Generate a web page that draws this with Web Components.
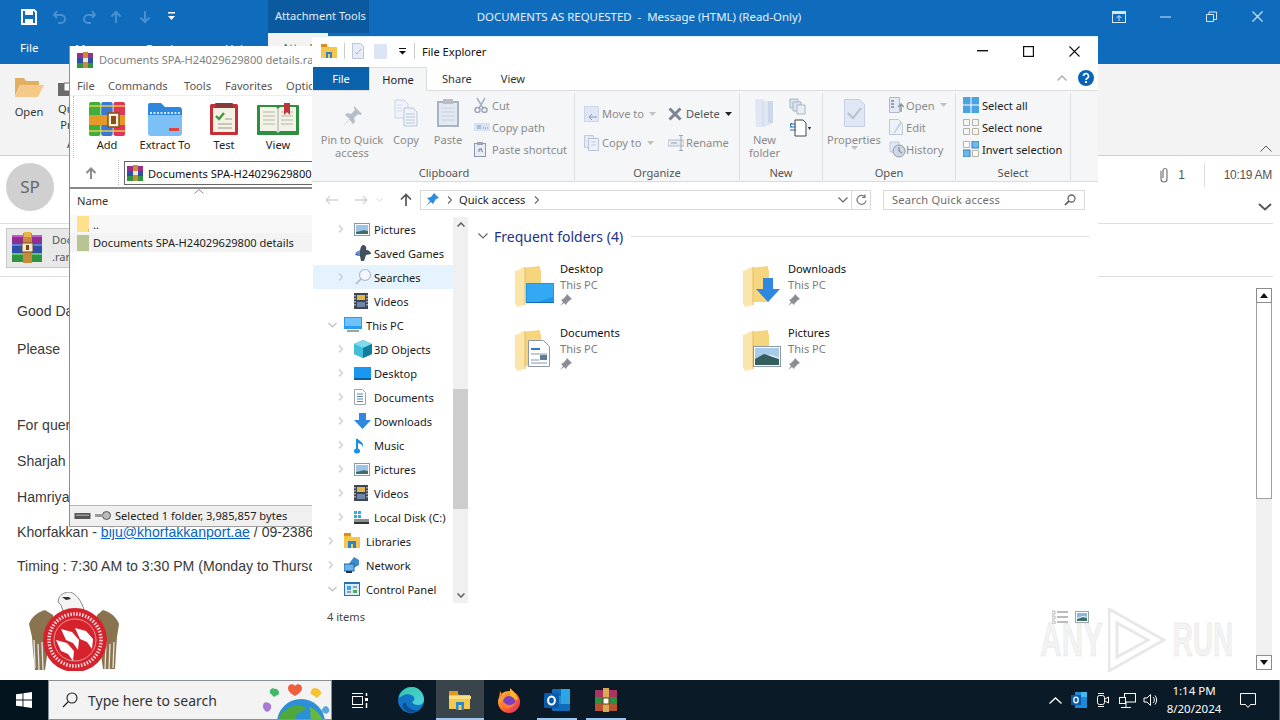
<!DOCTYPE html>
<html lang="en">
<head>
<meta charset="utf-8">
<title>Documents as requested</title>
<style>
  :root { --ui: "Noto Sans", "Open Sans", sans-serif; }
  html, body { margin: 0; padding: 0; width: 1280px; height: 720px; overflow: hidden; background: #fff; font-family: var(--ui); }
  desk-top { display: block; position: relative; width: 1280px; height: 680px; overflow: hidden; }
</style>
</head>
<body>
<desk-top>
  <mail-window></mail-window>
  <rar-window></rar-window>
  <explorer-window></explorer-window>
  <any-mark></any-mark>
</desk-top>
<task-bar></task-bar>

<script>
// svg bodies, [width, height, markup]
const ICONS = {
  save: [18,18,'<path d="M2 2h12l2 2v12H2z" fill="none" stroke="#fff" stroke-width="2"/><rect x="5" y="2" width="8" height="5" fill="#fff"/><rect x="5" y="11" width="8" height="5" fill="#fff"/>'],
  undo: [16,16,'<path d="M5 2L2 6l3 3M3 6h6a4 4 0 0 1 0 8H6" fill="none" stroke="#4a90cf" stroke-width="2"/>'],
  redo: [16,16,'<path d="M11 2l3 4-3 3M13 6H7a4 4 0 0 0 0 8h3" fill="none" stroke="#4a90cf" stroke-width="2"/>'],
  qup: [12,14,'<path d="M6 13V2M1.5 6.5L6 2l4.5 4.5" fill="none" stroke="#4a90cf" stroke-width="2"/>'],
  qdown: [12,14,'<path d="M6 1v11M1.5 7.5L6 12l4.5-4.5" fill="none" stroke="#4a90cf" stroke-width="2"/>'],
  custom: [8,9,'<rect y="0" width="7" height="1.5" fill="#fff"/><path d="M0 4h7L3.5 8z" fill="#fff"/>'],
  display: [14,12,'<rect x=".5" y=".5" width="13" height="11" fill="none" stroke="#d5e6f5"/><rect x=".5" y=".5" width="13" height="2.5" fill="#d5e6f5"/><path d="M7 10V5M4.5 7L7 4.5 9.5 7" stroke="#d5e6f5" fill="none"/>'],
  wmin: [11,2,'<rect width="11" height="1" y=".5" fill="#d5e6f5"/>'],
  wrestore: [11,11,'<path d="M.5 3.5h7v7h-7zM3 3V1h7.500v7.500H8" fill="none" stroke="#d5e6f5"/>'],
  wclose: [11,11,'<path d="M.5.5l10 10M10.5.5l-10 10" stroke="#d5e6f5" fill="none" stroke-width="1.1"/>'],
  mopen: [30,24,'<path d="M1 22V4h9l2 3h13v4H6z" fill="#e0b060"/><path d="M1 23l5-12h24l-6 12z" fill="#f5c987"/>'],
  qprint: [12,18,'<rect y="3" width="12" height="13" fill="#6a6a6a"/><path d="M6 3h6v8H6z" fill="#fff" stroke="#6a6a6a"/>'],
  clip: [10,16,'<path d="M2 4v8a3 3 0 0 0 6 0V3.5a2 2 0 0 0-4 0V11" fill="none" stroke="#777" stroke-width="1.2"/>'],
  mchev: [14,8,'<path d="M1 1l6 5.5L13 1" fill="none" stroke="#555" stroke-width="1.8"/>'],
  mup: [12,7,'<path d="M.5 6.5L6 1l5.500 5.500" fill="none" stroke="#555"/>'],

  rar: [32,32,'<rect x="1" y="3" width="30" height="9" fill="#8e2f92"/><rect x="1" y="12" width="30" height="9" fill="#2d4fa8"/><rect x="1" y="21" width="30" height="9" fill="#2f9340"/><rect x="1" y="3" width="30" height="2" fill="#c45bc8"/><rect x="1" y="12" width="30" height="2" fill="#5d82d8"/><rect x="1" y="21" width="30" height="2" fill="#66c46f"/><rect x="12" y="1" width="9" height="30" fill="#c98a3c"/><rect x="11" y="11" width="11" height="9" fill="#f3e7cf" stroke="#7a4a1b"/><rect x="15" y="13" width="3" height="5" fill="#7a4a1b"/><rect x="13" y="0" width="7" height="5" fill="#e9b44a"/>'],
  rarsm: [16,16,'<rect y="1" width="16" height="5" fill="#9a2f88"/><rect y="6" width="16" height="5" fill="#2d4fa8"/><rect y="11" width="16" height="5" fill="#2f9340"/><rect x="6" y="0" width="5" height="16" fill="#c98a3c"/><rect x="6" y="6" width="5" height="4" fill="#f3e7cf"/>'],
  rarbar: [24,24,'<rect x="1" y="2" width="22" height="7" fill="#a8345f"/><rect x="1" y="9" width="22" height="7" fill="#2f8f40"/><rect x="1" y="16" width="22" height="7" fill="#b5522f"/><rect x="9" y="0" width="6" height="24" fill="#d9a955"/><rect x="9" y="10" width="6" height="6" fill="#fff" stroke="#6a3a10"/>'],
  add: [36,34,'<rect x="0" y="0" width="11.5" height="34" rx="2" fill="#3fae3c"/><rect x="12.2" y="0" width="11.5" height="34" rx="2" fill="#3a78d4"/><rect x="24.500" y="0" width="11.500" height="34" rx="2" fill="#e0365a"/><rect x="0" y="3" width="36" height="2" fill="#f4d040" opacity=".7"/><rect x="0" y="28" width="36" height="2" fill="#f4d040" opacity=".7"/><rect x="0" y="13" width="36" height="10" fill="#e59a28"/><rect x="19" y="11" width="11" height="14" fill="#f7f0df" stroke="#8a4e14" stroke-width="1.5"/><rect x="22" y="14" width="5" height="8" fill="#8a4e14"/>'],
  extract: [36,34,'<path d="M1 30V3a2 2 0 0 1 2-2h11l4 4h14a3 3 0 0 1 3 3v22a3 3 0 0 1-3 3H4a3 3 0 0 1-3-3z" fill="#2f86dd"/><path d="M1 13h34v18a3 3 0 0 1-3 3H4a3 3 0 0 1-3-3z" fill="#7cc0f5"/><path d="M3 11h30" stroke="#cde8fb" stroke-dasharray="2 1.5" stroke-width="2"/><rect x="22" y="26" width="10" height="3" fill="#e2433f"/>'],
  test: [28,32,'<rect x="0" y="1" width="28" height="31" rx="1.5" fill="#c72f38"/><rect x="3" y="5" width="22" height="24" fill="#f5f0e4"/><rect x="5" y="0" width="18" height="5" rx="1" fill="#8a3a3a"/><path d="M6 13l3 3 5-6" stroke="#3b9c3e" stroke-width="2.4" fill="none"/><path d="M15 16h7M8 21h14M8 25h14" stroke="#9a9a8a"/>'],
  book: [42,32,'<rect x="0" y="2" width="42" height="30" rx="1" fill="#2f8f40"/><path d="M3 4h16l2 2 2-2h16v24H23l-2 2-2-2H3z" fill="#f2f2e8"/><path d="M21 6v24" stroke="#aaa"/><path d="M6 9h12M6 13h12M6 17h12M6 21h12M24 9h12M24 13h12M24 17h12M24 21h12" stroke="#b5b5a8"/><path d="M27 0h6v12l-3-3-3 3z" fill="#c2343a"/>'],
  rup: [14,14,'<path d="M7 13V3M2.5 7L7 2.5 11.5 7" fill="none" stroke="#8a8a8a" stroke-width="2"/>'],
  sortc: [10,5,'<path d="M.5 4.5L5 .5l4.500 4" fill="none" stroke="#888"/>'],
  rfolder: [12,16,'<rect width="12" height="16" fill="#ffe08c"/><rect x="11" y="13" width="1" height="3" fill="#e0c070"/>'],
  rsel: [12,16,'<rect width="12" height="16" fill="#b9c494"/>'],
  rdrive: [17,8,'<rect x=".5" y="1" width="16" height="6" fill="#555"/><rect x="2" y="2.5" width="13" height="1.5" fill="#999"/>'],
  rkey: [16,9,'<circle cx="11.5" cy="4.5" r="4" fill="#bbb" stroke="#555"/><rect y="3" width="8" height="3" fill="#999"/>'],

  qaf: [16,16,'<path d="M0 2h6l2 2h8v11H0z" fill="#f4c64e"/><rect y="1" width="6" height="3" fill="#d98f1e"/><rect x="5" y="9" width="6" height="6" fill="#2f83c8"/><rect x="7" y="11" width="2" height="4" fill="#f4c64e"/>'],
  qcheck: [12,16,'<path d="M.5.5h8l3 3v12H.5z" fill="#e7ecf7" stroke="#b9c6dd"/><path d="M3 9l2 2 4-5" stroke="#a9b8d6" fill="none"/>'],
  qblank: [13,15,'<path d="M0 0h13v15H0z" fill="#dde5f5"/>'],
  qdrop: [8,7,'<rect width="7" height="1" fill="#111"/><path d="M0 3h7L3.5 6.5z" fill="#111"/>'],
  xmin: [11,2,'<rect width="11" height="1.4" fill="#111"/>'],
  xmax: [11,11,'<rect x=".6" y=".6" width="9.8" height="9.8" fill="none" stroke="#111" stroke-width="1.2"/>'],
  xclose: [11,11,'<path d="M.5.5l10 10M10.5.5l-10 10" stroke="#111" fill="none" stroke-width="1.1"/>'],
  collapse: [10,6,'<path d="M.5 5.5L5 1l4.500 4.500" fill="none" stroke="#aaa" stroke-width="1.4"/>'],
  help: [16,16,'<circle cx="8" cy="8" r="8" fill="#0b63b5"/><path d="M5.500 6a2.500 2.500 0 1 1 3.700 2.200C8.300 8.800 8 9.200 8 10" fill="none" stroke="#fff" stroke-width="1.700"/><rect x="7" y="11" width="2" height="2" fill="#fff"/>'],
  pinbig: [22,22,'<path d="M13 1l8 8-2 1-2-1-4 4 1 4-2 2-4-5-6 7 7-7-5-4 2-2 4 1 4-4-1-2z" fill="#b5bdc8"/>'],
  copybig: [24,28,'<path d="M1 1h9l4 4v14H1z" fill="#eef2f9" stroke="#c8d3e3"/><path d="M10 9h9l4 4v14H10z" fill="#eef2f9" stroke="#b9c6da"/><path d="M12 15h9M12 18h9M12 21h9M12 24h9" stroke="#bcc7d8"/><path d="M3 6h5M3 9h5M3 12h5" stroke="#d5dcea"/>'],
  pastebig: [22,28,'<rect x="1" y="3" width="20" height="24" fill="#e3e9f3" stroke="#a9b2bf" stroke-width="2"/><rect x="6" y="0" width="10" height="5" fill="#b7bdc6"/><path d="M4 9h14M4 13h14M4 17h14M4 21h14" stroke="#c8d1e2"/>'],
  cut: [14,16,'<path d="M3 1l6 10M11 1L5 11" stroke="#aab4c6" stroke-width="1.6"/><circle cx="3.5" cy="13" r="2.5" fill="none" stroke="#9aa5b8" stroke-width="1.5"/><circle cx="10.5" cy="13" r="2.5" fill="none" stroke="#9aa5b8" stroke-width="1.5"/>'],
  cpath: [16,8,'<rect width="16" height="8" fill="#d9e2f5"/><path d="M4 2v4M6 2v4M9 5h1M11 5h1M13 5h1" stroke="#8c97ad"/>'],
  pshort: [12,15,'<rect x=".5" y="1.5" width="11" height="13" fill="#e7ecf5" stroke="#8e98a8"/><rect x="3" y="0" width="6" height="3" fill="#9aa4b2"/><path d="M5 10V7h3l-1.2 1.2L9 10" stroke="#6e7c90" fill="none"/>'],
  moveto: [15,16,'<rect width="15" height="16" fill="#dfe6f4"/><rect x=".5" y=".5" width="14" height="15" fill="none" stroke="#cdd6e6"/><path d="M13 11H6M8 8l-3 3 3 3" stroke="#8c9ab2" fill="none"/>'],
  copyto: [15,16,'<path d="M.5.5h9v12h-9z" fill="#e3eaf6" stroke="#c0cbdd"/><path d="M4.5 3.5h10v12h-10z" fill="#edf1f9" stroke="#b6c3d8"/><path d="M7 7h5M7 10h5" stroke="#c0cbdd"/>'],
  del: [14,14,'<path d="M1.5 1.5l11 11M12.5 1.5l-11 11" stroke="#7b8593" stroke-width="3"/>'],
  rename: [16,16,'<rect y="5" width="16" height="6" fill="#e6ebf3" stroke="#b5bdca"/><path d="M3 8h6" stroke="#9aa4b4"/><path d="M13 0v16M11 .5h4M11 15.5h4" stroke="#9aa4b4"/>'],
  dropg: [7,4,'<path d="M0 0h7L3.5 4z" fill="#c0c0c0"/>'],
  dropk: [7,4,'<path d="M0 0h7L3.5 4z" fill="#222"/>'],
  newf: [22,30,'<path d="M1 1h8l2 2h8v22l-8 4H2z" fill="#dfe6f4"/><path d="M9 4v24" stroke="#cfd8e8"/><path d="M14 3h5v22h-5z" fill="#ccd8ea"/>'],
  newi: [20,17,'<path d="M1 1h8v9H1z" fill="#dde4f0" stroke="#a8b3c4"/><path d="M4 4h8v9H4z" fill="#dde4f0" stroke="#a8b3c4"/><path d="M8 7h8v9H8z" fill="#e9eef6" stroke="#a8b3c4"/>'],
  easy: [22,18,'<path d="M6 1h8l3 3v13H6z" fill="#fff" stroke="#444"/><path d="M1 5h6M1 8h6M1 11h6" stroke="#1d6ec0"/><path d="M3 4l-2 2 2 2" stroke="#1d6ec0" fill="none"/><path d="M19 8h3l-1.500 3z" fill="#222"/>'],
  props: [21,28,'<path d="M.5.5h15l5 5v22H.5z" fill="#dfe6f4" stroke="#c5cfe0"/><path d="M4 14l5 5 8-10" stroke="#b6bfcc" stroke-width="2" fill="none"/>'],
  opens: [15,16,'<path d="M.5.5h10v15H.5z" fill="#e4eaf5" stroke="#aeb9ca"/><path d="M2 4h3M2 7h3M2 10h3" stroke="#7d8898" stroke-width="1.5"/><path d="M12 15V8M9 10l3-3 3 3" stroke="#8a97a8" fill="none" stroke-width="1.5"/>'],
  edit: [14,16,'<path d="M.5.5h9l4 4v11H.5z" fill="#edf1f8" stroke="#bcc7d8"/><path d="M11 3L5 13l-1 2 2-1 7-10z" fill="#c7d0df"/>'],
  hist: [17,17,'<path d="M1 1h9v10H1z" fill="#dfe6f4" stroke="#c0cbdc"/><circle cx="10" cy="10" r="6" fill="#cdd6e4" stroke="#8d99aa"/><path d="M10 6v4l3 2" stroke="#707c8c" fill="none"/>'],
  selall: [16,16,'<rect width="16" height="16" fill="#4aa3e3"/><path d="M8 0v16M0 8h16" stroke="#fff"/>'],
  selnone: [16,16,'<path d="M.5.5h6v6h-6zM9.5.5h6v6h-6zM.5 9.5h6v6h-6zM9.5 9.5h6v6h-6z" fill="none" stroke="#b8b0a0"/>'],
  selinv: [16,16,'<rect x="0" y="9" width="7" height="7" fill="#6cb9ee" stroke="#2f7fc0"/><rect x="9" y="0" width="7" height="7" fill="#6cb9ee" stroke="#2f7fc0"/><path d="M.5.5h6v6h-6zM9.5 9.5h6v6h-6z" fill="#fff" stroke="#b8b0a0"/>'],
  navb: [14,10,'<path d="M13 5H1M5 1L1 5l4 4" stroke="#d4d4d4" stroke-width="1.3" fill="none"/>'],
  navf: [14,10,'<path d="M1 5h12M9 1l4 4-4 4" stroke="#d4d4d4" stroke-width="1.3" fill="none"/>'],
  navd: [7,4,'<path d="M.5.5L3.5 3l3-2.500" stroke="#d8d8d8" fill="none"/>'],
  navu: [12,13,'<path d="M6 13V2M1 6.5L6 1.5l5 5" stroke="#555" stroke-width="1.7" fill="none"/>'],
  star: [14,13,'<path d="M9 0l5 5-3 1-3 5-2-2-5 4 4-5-3-3 4-1z" fill="#2d8ee0"/>'],
  gt: [5,8,'<path d="M1 .5L4.5 4 1 7.5" stroke="#666" fill="none" stroke-width="1.1"/>'],
  chevd: [10,6,'<path d="M.5.5L5 5 9.5.5" stroke="#666" stroke-width="1.2" fill="none"/>'],
  refresh: [11,12,'<path d="M9 3a4.5 4.5 0 1 0 1 3.5M9 .5V3.5H6" stroke="#777" fill="none" stroke-width="1.2"/>'],
  mag: [12,12,'<circle cx="7.5" cy="4.5" r="3.5" fill="none" stroke="#666" stroke-width="1.3"/><path d="M5 7L1 11" stroke="#555" stroke-width="1.7"/>'],
  navr: [5,8,'<path d="M1 .5L4.5 4 1 7.5" stroke="#c8c8c8" fill="none" stroke-width="1.1"/>'],
  navo: [9,6,'<path d="M.5 1L4.5 5l4-4" stroke="#bdbdbd" fill="none" stroke-width="1.1"/>'],
  sbu: [8,5,'<path d="M.5 4.5L4 1l3.500 3.500" stroke="#606060" stroke-width="1.5" fill="none"/>'],
  sbd: [8,5,'<path d="M.5.5L4 4 7.5.5" stroke="#606060" stroke-width="1.5" fill="none"/>'],
  pic: [16,13,'<rect x=".5" y=".5" width="15" height="12" fill="#fff" stroke="#8d98a6"/><path d="M2 2h12v6l-4-1-8 2z" fill="#9fc3e6"/><path d="M2 9l8-2 4 1v3H2z" fill="#3f6f6a"/>'],
  games: [18,18,'<path d="M9 1c3 0 4 3 3 5 3 0 5 2 5 4l-5 1-2 6H7l-1-5-5-1 3-4 2 1c0-3 1-7 3-7z" fill="#41505f"/><path d="M1 9l5-3v6z" fill="#5c94d6"/>'],
  searchi: [18,18,'<circle cx="11" cy="7" r="5.5" fill="#f3f7fb" stroke="#a5b8cc" stroke-width="1.1"/><path d="M7 11l-5 5" stroke="#a5b8cc" stroke-width="1.6"/>'],
  video: [14,16,'<rect width="14" height="16" fill="#3f4650"/><rect x="3" y="2" width="8" height="5" fill="#e0b84f"/><rect x="3" y="9" width="8" height="5" fill="#6b87b0"/><path d="M1 2v12M13 2v12" stroke="#ddd" stroke-dasharray="1.5 1.5" stroke-width="1.2"/>'],
  pc: [18,16,'<rect x="0" y="0" width="18" height="12" fill="#2b9cf2"/><rect x="1" y="1" width="16" height="8" fill="#6dc2f9"/><rect x="3" y="13" width="12" height="2" fill="#9aa4ad"/>'],
  cube: [18,18,'<path d="M9 0l9 4v10l-9 4-9-4V4z" fill="#21a3c4"/><path d="M9 8L0 4l9-4 9 4z" fill="#7fdbec"/><path d="M9 8v10l9-4V4z" fill="#137d9f"/><path d="M0 4l9 4v10L0 14z" fill="#4cc4e0" opacity=".8"/>'],
  desk: [17,13,'<rect width="17" height="13" fill="#1a97ee"/><rect y="11" width="17" height="2" fill="#0d5e9e"/>'],
  doc: [12,16,'<path d="M.5.5h8l3 3v12H.5z" fill="#fff" stroke="#9aa6b3"/><path d="M3 5h6M3 7.5h6M3 10h6M3 12.5h6" stroke="#5d85ad"/>'],
  dl: [17,16,'<path d="M5 0h7v7h5l-8.500 9L0 7h5z" fill="#2f87df"/>'],
  music: [11,17,'<path d="M3 2v11" stroke="#1b8fe4" stroke-width="2"/><ellipse cx="3" cy="14" rx="3" ry="2.5" fill="#1b8fe4"/><path d="M3 1c1 3 7 3 6 9-1-3-4-4-6-4z" fill="#1b8fe4"/>'],
  disk: [15,13,'<rect x="0" y="0" width="3" height="3" fill="#3da9e0"/><rect x="4" y="0" width="3" height="3" fill="#3da9e0"/><rect x="0" y="4" width="3" height="3" fill="#3da9e0"/><rect x="4" y="4" width="3" height="3" fill="#3da9e0"/><rect x="0" y="8" width="15" height="5" fill="#8a8f92"/><rect x="0" y="11" width="15" height="2" fill="#333"/>'],
  lib: [16,16,'<path d="M0 2h6l2 2h8v11H0z" fill="#f4c64e"/><rect y="0" width="7" height="3" fill="#d98f1e"/><rect x="4" y="8" width="8" height="7" fill="#2f83c8"/><rect x="7" y="11" width="2" height="4" fill="#f4c64e"/>'],
  net: [16,16,'<path d="M10 0l5 3v5l-7 4-4-4z" fill="#3a8ad0"/><rect x="0" y="7" width="10" height="7" fill="#6ab2e8" stroke="#29629b"/><rect x="2" y="14" width="6" height="2" fill="#333"/>'],
  cp: [16,14,'<rect width="16" height="14" fill="#2d6fb6"/><rect x="1" y="2" width="14" height="11" fill="#d6ebf9"/><rect x="3" y="4" width="4" height="4" fill="#41a3e0"/><rect x="9" y="8" width="4" height="3" fill="#4caf50"/><path d="M3 10h4M9 5h4" stroke="#555"/>'],
  fback: [42,42,'<path d="M6 3l19-2v4h1v32H6z" fill="#f5d67e"/><path d="M0 6l10-4v38L2 42 0 38z" fill="#fce5a8"/><path d="M10 2v38" stroke="#e2bd6a"/>'],
  fdesk: [28,20,'<rect width="28" height="20" fill="#1a97ee"/><path d="M1 1h26v13l-16 5H1z" fill="#34a8f3"/><rect y="19" width="28" height="1" fill="#0d6cb3"/>'],
  fdl: [24,24,'<path d="M7 0h10v11h7L12 24 0 11h7z" fill="#2f87df"/>'],
  fdoc: [22,27,'<path d="M.5.5h15l6 6v20H.5z" fill="#fff" stroke="#8d97a5"/><path d="M3 9h9" stroke="#2a7ad0" stroke-width="2"/><path d="M3 14h16M3 20h8M3 23h16" stroke="#7e97b0"/><rect x="12" y="15" width="7" height="5" fill="#5d7c96"/>'],
  fpic: [28,21,'<rect x=".5" y=".5" width="27" height="20" fill="#fff" stroke="#8d98a6"/><path d="M2 2h24v10l-8-3L2 13z" fill="#a8cbea"/><path d="M2 13l9-5 15 5v6H2z" fill="#335f5e"/>'],
  pin: [12,12,'<path d="M7 0l5 5-2 1-3 3-1 2-2-2-4 3 3-4-2-2 2-1 3-3z" fill="#8a8f96"/>'],
  vdet: [16,14,'<path d="M0 1h3v3H0zM0 6h3v3H0zM0 11h3v3H0z" fill="none" stroke="#a5a5a5" stroke-width=".8"/><path d="M5 2h11M5 7h11M5 12h11" stroke="#777"/>'],
  vtile: [14,12,'<rect x=".5" y=".5" width="13" height="11" fill="#fff" stroke="#9aa4ad"/><path d="M2 2h10v4l-4-1-6 2z" fill="#8ab6df"/><path d="M2 8l6-2 4 1v3H2z" fill="#3f6f6a"/>'],

  start: [16,16,'<path d="M0 2.3L6.5 1.4v6.2H0zM7.4 1.3L16 0v7.6H7.4zM0 8.4h6.500v6.200L0 13.7zM7.4 8.4H16V16l-8.600-1.300z" fill="#fff"/>'],
  tsearch: [16,16,'<circle cx="10" cy="6" r="5" fill="none" stroke="#222" stroke-width="1.1"/><path d="M6 10l-5 5" stroke="#222" stroke-width="1.3"/>'],
  earth: [72,40,'<circle cx="41" cy="42" r="24" fill="#2d8fd6"/><path d="M20 34c8-9 18-12 26-7-2 5-10 3-10 9s-4 5-6 6H18z" fill="#4fa83c"/><path d="M49 26c7 2 12 8 14 14H52c-3-4 0-8-3-14z" fill="#67b93f"/><path d="M15 8c-3-2-6 1-5 4l4 4 5-3c1-2-2-6-4-5z" fill="#3eb86b"/><path d="M35 5c-2-3-7-2-7 2 0 4 4 6 7 8 3-2 7-4 7-8 0-4-5-5-7-2z" fill="#ee5f3e"/><path d="M55 7c-3 0-5 3-4 6l6 4 4-4c1-3-3-6-6-6z" fill="#f4c430"/><path d="M4 22c-2 3-1 7 3 9 3-1 5-4 4-7-1-2-5-4-7-2z" fill="#a77ad6"/><path d="M65 25c3 0 5 3 4 6l-3 2c-3-1-5-3-4-5z" fill="#5aa6de"/>'],
  taskview: [16,15,'<rect x=".5" y="3.5" width="10" height="8" fill="none" stroke="#fff"/><path d="M0 .5h11M0 14.5h11" stroke="#fff"/><rect x="13" y="5" width="3" height="3" fill="#fff"/><path d="M14.5 0v3M14.5 10v5" stroke="#fff" stroke-width="1.5"/>'],
  edge: [26,26,'<defs><linearGradient id="e" x1="0" y1="0" x2="1" y2="1"><stop offset="0" stop-color="#34c7a6"/><stop offset="1" stop-color="#4fd4e0"/></linearGradient></defs><circle cx="13" cy="13" r="13" fill="#1174c4"/><path d="M1 10C3 3 9 0 14 0c7 0 12 6 12 13 0 3-3 5-6 5-3 0-5-1-6-3 2-1 3-3 2-5-2-3-8-4-12-1-2 1-3 2-3 1z" fill="url(#e)"/><path d="M8 16c1 5 6 8 12 7-3 3-10 4-14-1-3-3-1-8 2-6z" fill="#0d4f95"/>'],
  xp: [22,19,'<path d="M0 2h8l2 2h11v14H0z" fill="#f7c948"/><rect y="0" width="9" height="4" fill="#e09a1f"/><rect x="0" y="5" width="22" height="3" fill="#fbe08a"/><rect x="7" y="11" width="8" height="8" fill="#2f87cf"/><rect x="9.5" y="14" width="3" height="5" fill="#f7c948"/>'],
  fox: [24,25,'<defs><linearGradient id="f" x1="0" y1="0" x2="1" y2="1"><stop offset="0" stop-color="#ffcb3d"/><stop offset=".5" stop-color="#ff6a2b"/><stop offset="1" stop-color="#e0246a"/></linearGradient></defs><circle cx="12" cy="14" r="11" fill="url(#f)"/><path d="M13 0c3 3 7 6 8 12l-8-2z" fill="#ffb52e"/><path d="M3 3l3 5-4 3z" fill="#ff8a2b"/><circle cx="12" cy="14" r="6" fill="#7a3fc0"/><path d="M6 13c2 4 8 6 13 1-2 6-9 8-13 5-1-2-1-4 0-6z" fill="#ff7b30"/>'],
  ol: [26,24,'<rect x="8" y="1" width="18" height="22" rx="1" fill="#0f6cbd"/><rect x="17" y="1" width="9" height="7" fill="#28a8ea"/><rect x="8" y="8" width="9" height="8" fill="#1f8ad6"/><rect x="17" y="8" width="9" height="8" fill="#50d9ff" opacity=".5"/><rect x="0" y="5" width="15" height="15" rx="1.5" fill="#0a5aa8"/><ellipse cx="7.5" cy="12.5" rx="3.4" ry="4" fill="none" stroke="#fff" stroke-width="2"/>'],
  olt: [16,16,'<rect x="4" y="0" width="12" height="16" fill="#1b8ad8"/><rect x="10" y="0" width="6" height="5" fill="#45b8ef"/><rect x="0" y="3" width="10" height="10" fill="#0a5aa8"/><ellipse cx="5" cy="8" rx="2.2" ry="2.8" fill="none" stroke="#fff" stroke-width="1.3"/>'],
  caret: [13,7,'<path d="M.5 6.5L6.5 1l6 5.500" fill="none" stroke="#fff" stroke-width="1.3"/>'],
  meet: [12,16,'<rect x=".5" y="3.5" width="7" height="9" rx="2" fill="none" stroke="#fff"/><path d="M8 7l3.500-2v6L8 9" fill="none" stroke="#fff"/><path d="M1 1.5h6M1 14.5h6" stroke="#fff"/>'],
  netw: [17,15,'<rect x="5.5" y=".5" width="11" height="8.5" fill="none" stroke="#fff"/><rect x=".5" y="4.5" width="6" height="6" fill="#0a1a26" stroke="#fff"/><path d="M2 14.5h10M7 9v5" stroke="#fff"/>'],
  vol: [16,14,'<path d="M1 5h3l3.500-3.500v11L4 9H1z" fill="none" stroke="#fff"/><path d="M10 4a4 4 0 0 1 0 6M12 2.5a7 7 0 0 1 0 9" fill="none" stroke="#fff"/>'],
  note: [16,15,'<path d="M.5.5h15v11h-5l-2.500 3-2.500-3h-5z" fill="none" stroke="#fff"/>'],
  eagle: [92,79,'<path d="M41 0c-5 0-9 2-11 6l-1 4 3 3 2 6 22 3c-1-8-7-20-15-22z" fill="#f4f4f4" stroke="#8a8a8a"/><path d="M33 5l7 0 2 2-5 1z" fill="#333"/><path d="M24 23L16 18C8 20 2 26 0 32l3 13 1 14 2 19h10l2-14 6-15z" fill="#8a7450"/><path d="M68 23l6-5c8 2 14 8 16 14l-2 13-1 14-1 18H74l-2-14-6-15z" fill="#8a7450"/><path d="M5 48l1 28M9 52l1 26M13 50l1 28M85 50l-1 26M81 52l-1 26M77 50l-1 28" stroke="#e6e6e6" stroke-width="1.300"/><circle cx="46" cy="48" r="32" fill="#d6222c"/><circle cx="46" cy="48" r="21" fill="none" stroke="#f4c8c8" stroke-width=".7"/><circle cx="46" cy="48" r="26" fill="none" stroke="#fff" stroke-width="3.500" stroke-dasharray="1.500 1.500" opacity=".85"/><g fill="#fff"><path transform="translate(41 46)" d="M-9-9L2-6L9 2L8 12L3 5L-4 2z"/><path transform="translate(55 45)" d="M-9-9L2-6L9 2L8 12L3 5L-4 2z"/><path transform="translate(36 57)" d="M-9-9L2-6L9 2L8 12L3 5L-4 2z"/></g>'],
};

function iconMarkup(name) {
  const ic = ICONS[name];
  if (!ic) return '';
  return `<svg xmlns="http://www.w3.org/2000/svg" width="${ic[0]}" height="${ic[1]}" viewBox="0 0 ${ic[0]} ${ic[1]}" style="display:block">${ic[2]}</svg>`;
}

class UiIcon extends HTMLElement {
  constructor() {
    super();
    this.attachShadow({mode: 'open'});
    this.shadowRoot.innerHTML = `<style>:host{display:inline-flex;flex:none;align-items:center;justify-content:center;line-height:0}</style>${iconMarkup(this.getAttribute('name'))}`;
  }
}

// tall ribbon button, icon over label
class BigButton extends HTMLElement {
  constructor() {
    super();
    this.attachShadow({mode: 'open'});
    const w = this.getAttribute('w') || 48;
    const ih = this.getAttribute('ih') || 40;
    const c = this.getAttribute('color') || '#8b8b8b';
    const off = this.getAttribute('off') || 0;
    this.shadowRoot.innerHTML = `
      <style>
        :host{display:flex;flex-direction:column;align-items:center;width:${w}px;flex:none;color:${c};font-size:11.1px;line-height:13px;text-align:center}
        .i{height:${ih}px;display:flex;align-items:center;justify-content:center;padding-top:${off}px;box-sizing:border-box}
      </style>
      <div class="i"><ui-icon name="${this.getAttribute('icon')}"></ui-icon></div>
      <slot></slot>`;
  }
}

class SmallButton extends HTMLElement {
  constructor() {
    super();
    this.attachShadow({mode: 'open'});
    const c = this.getAttribute('color') || '#8b8b8b';
    const h = this.getAttribute('h') || 22;
    const iw = this.getAttribute('iw') || 18;
    const drop = this.getAttribute('drop');
    this.shadowRoot.innerHTML = `
      <style>
        :host{display:flex;align-items:center;height:${h}px;color:${c};font-size:11.1px;white-space:nowrap}
        .i{width:${iw}px;display:flex;justify-content:flex-start;align-items:center}
        .d{margin-left:5px;display:flex}
      </style>
      <div class="i"><ui-icon name="${this.getAttribute('icon')}"></ui-icon></div>
      <slot></slot>${drop ? `<div class="d"><ui-icon name="${drop}"></ui-icon></div>` : ''}`;
  }
}

class RibbonGroup extends HTMLElement {
  constructor() {
    super();
    this.attachShadow({mode: 'open'});
    const w = this.getAttribute('w');
    this.shadowRoot.innerHTML = `
      <style>
        :host{display:flex;flex-direction:column;width:${w}px;flex:none;box-sizing:border-box;border-right:1px solid #dfe0e2;height:87px;margin-top:2px}
        .b{flex:1;display:flex;padding-left:${this.getAttribute('pad') || 0}px;min-height:0}
        .l{height:14px;line-height:14px;text-align:center;font-size:11.1px;color:#555}
      </style>
      <div class="b"><slot></slot></div>
      <div class="l">${this.getAttribute('label')}</div>`;
  }
}

class NavRow extends HTMLElement {
  constructor() {
    super();
    this.attachShadow({mode: 'open'});
    const lvl = this.getAttribute('level') === '1' ? 1 : 2;
    const ch = this.getAttribute('chev');
    const chevIcon = ch === 'o' ? 'navo' : ch === 'r' ? 'navr' : '';
    const bg = this.hasAttribute('hot') ? '#e5f3ff' : 'transparent';
    this.shadowRoot.innerHTML = `
      <style>
        :host{display:flex;align-items:center;height:24px;background:${bg};font-size:11.1px;color:#1a1a1a;white-space:nowrap;padding-left:${lvl === 1 ? 15 : 25}px}
        .c{width:16px;display:flex;align-items:center}
        .i{width:${lvl === 1 ? 22 : 20}px;display:flex;align-items:center}
      </style>
      <div class="c">${chevIcon ? `<ui-icon name="${chevIcon}"></ui-icon>` : ''}</div>
      <div class="i"><ui-icon name="${this.getAttribute('icon')}"></ui-icon></div>
      <slot></slot>`;
  }
}

class FolderTile extends HTMLElement {
  constructor() {
    super();
    this.attachShadow({mode: 'open'});
    this.shadowRoot.innerHTML = `
      <style>
        :host{display:flex;width:228px;height:48px;flex:none;font-size:11.1px;line-height:16px;white-space:nowrap}
        .pic{position:relative;width:45px;height:48px;flex:none}
        .pic .f{position:absolute;left:0;top:4px}
        .pic .o{position:absolute;right:${this.getAttribute('or') || 0}px;bottom:${this.getAttribute('ob') || 6}px}
        .t{color:#111;height:16px}
        .s{color:#7b7b7b;height:16px}
        .p{height:14px;display:flex;align-items:center}
      </style>
      <div class="pic"><ui-icon class="f" name="fback"></ui-icon><ui-icon class="o" name="${this.getAttribute('icon')}"></ui-icon></div>
      <div>
        <div class="t"><slot></slot></div>
        <div class="s">This PC</div>
        <div class="p"><ui-icon name="pin"></ui-icon></div>
      </div>`;
  }
}

class ExplorerScroll extends HTMLElement {
  constructor() {
    super();
    this.attachShadow({mode: 'open'});
    this.shadowRoot.innerHTML = `
      <style>
        :host{display:flex;flex-direction:column;width:15px;flex:none;height:386px;background:#f0f0f0}
        .b{height:15px;display:flex;align-items:center;justify-content:center;flex:none}
        .s{height:157px}
        .t{height:120px;background:#cdcdcd}
        .g{flex:1}
      </style>
      <div class="b"><ui-icon name="sbu"></ui-icon></div>
      <div class="s"></div><div class="t"></div><div class="g"></div>
      <div class="b"><ui-icon name="sbd"></ui-icon></div>`;
  }
}

class MailWindow extends HTMLElement {
  constructor() {
    super();
    this.attachShadow({mode: 'open'});
    this.shadowRoot.innerHTML = `
      <style>
        :host{position:absolute;left:0;top:0;width:1280px;height:680px;display:flex;flex-direction:column;background:#fff;color:#333;font-size:12px;overflow:hidden}
        .blue{background:#0f6cbd;height:64px;flex:none;color:#fff;display:flex;flex-direction:column}
        .top{height:33px;position:relative;display:flex;align-items:center}
        .qa{display:flex;align-items:center;padding-left:20px;width:268px;box-sizing:border-box;flex:none}
        .qa ui-icon{margin-right:13px}
        .ctx{width:101px;height:33px;background:#0b5a9f;line-height:32px;font-size:11.1px;padding-left:7px;box-sizing:border-box;color:#e3eef8;white-space:nowrap;flex:none}
        .title{position:absolute;left:369px;width:540px;text-align:center;font-size:11.45px;color:#e6f0f9;white-space:pre}
        .ctl{margin-left:auto;display:flex;align-items:center}
        .ctl div{width:46px;display:flex;justify-content:center}
        .tabs{height:31px;display:flex;font-size:11.5px;line-height:30px;position:relative}
        .tabs span{position:absolute;color:#fff;top:0}
        .ribbon{height:92px;flex:none;background:#f3f3f3;border-bottom:1px solid #d0d0d0;box-sizing:border-box;display:flex;position:relative;color:#333;font-size:11.1px}
        .rb{display:flex;flex-direction:column;align-items:center;padding-top:10px;width:58px;box-sizing:border-box;flex:none}
        .rb span{margin-top:6px;line-height:15px;text-align:center}
        .collapse{position:absolute;right:8px;bottom:3px}
        .att-tab{position:absolute;left:268px;top:0;width:60px;height:13px;background:#f3f3f3;color:#555;line-height:30px;font-size:11.5px;padding-left:14px;box-sizing:border-box;overflow:hidden;white-space:nowrap}
        .head{height:67px;flex:none;display:flex;align-items:flex-start;padding:7px 8px 0 6px;box-sizing:border-box;color:#555}
        .av{width:48px;height:48px;border-radius:50%;background:#d0d0d0;text-align:center;line-height:47px;font-size:17px;color:#666;flex:none}
        .rightside{margin-left:auto;display:flex;align-items:center;height:24px;font-family:"Liberation Sans",sans-serif;font-size:12px;letter-spacing:-.3px}
        .sep{width:1px;height:24px;background:#ddd;margin:0 19px}
        .row2{height:54px;flex:none;box-sizing:border-box;border-top:1px solid #dedede;border-bottom:1px solid #dedede;margin-right:7px;display:flex;padding:4px 0 0 6px;position:relative}
        .att{width:64px;height:40px;background:#e8e8e8;border:1px solid #c8c8c8;box-sizing:border-box;display:flex;align-items:center;padding-left:4px;flex:none;gap:9px;font-size:11.1px;line-height:17px;color:#555;overflow:hidden}
        .down{position:absolute;right:1px;top:-21px}
        .body{flex:1;display:flex;min-height:0}
        .txt{flex:1;padding:24px 0 0 17px;font-family:"Liberation Sans",Arial,sans-serif;font-size:14.1px;line-height:20px;color:#3a3a3a;white-space:nowrap;overflow:hidden;min-width:0}
        .txt p{margin:0;height:20px}
        a{color:#0563c1;text-decoration:underline}
        .logo{height:79px;overflow:hidden;margin:16px 0 0 12px}
        .sb{margin:11px 8px 10px 0;width:16px;display:flex;flex-direction:column;box-sizing:border-box;background:#f0f0f0}
        .sb .k{height:15px;border:1px solid #8c8c8c;background:#fff;box-sizing:border-box;display:flex;align-items:center;justify-content:center;flex:none}
        .sb .k i{display:block;width:0;height:0;border-left:4px solid transparent;border-right:4px solid transparent}
        .sb .th{height:196px;border:1px solid #a0a0a0;border-top:0;background:#fff;box-sizing:border-box;flex:none}
        .sb .tr{flex:1}
      </style>
      <div class="blue">
        <div class="top">
          <div class="qa">
            <ui-icon name="save" style="margin-right:14px"></ui-icon><ui-icon name="undo"></ui-icon><ui-icon name="redo"></ui-icon><ui-icon name="qup" style="margin-right:17px"></ui-icon><ui-icon name="qdown" style="margin-right:17px"></ui-icon><ui-icon name="custom"></ui-icon>
          </div>
          <div class="ctx">Attachment Tools</div>
          <div class="title">DOCUMENTS AS REQUESTED  -  Message (HTML) (Read-Only)</div>
          <div class="ctl">
            <div><ui-icon name="display"></ui-icon></div>
            <div><ui-icon name="wmin"></ui-icon></div>
            <div><ui-icon name="wrestore"></ui-icon></div>
            <div><ui-icon name="wclose"></ui-icon></div>
          </div>
        </div>
        <div class="tabs">
          <span style="left:20px">File</span>
          <span style="left:75px;top:1px">Message</span>
          <span style="left:146px;top:1px">Read</span>
          <span style="left:225px;top:1px">Help</span>
          <div class="att-tab">Attachments</div>
        </div>
      </div>
      <div class="ribbon">
        <div class="rb"><ui-icon name="mopen"></ui-icon><span>Open</span></div>
        <div class="rb" style="width:24px;align-items:flex-start;padding-top:16px;overflow:hidden"><ui-icon name="qprint"></ui-icon><span style="margin-top:3px;line-height:16px">Quick<br>Print</span><span style="margin:3px 0 0 9px;text-align:left">Actions</span></div>
        <ui-icon class="collapse" name="mup"></ui-icon>
      </div>
      <div class="head">
        <div class="av">SP</div>
        <div class="rightside">
          <ui-icon name="clip"></ui-icon><span style="margin-left:9px">1</span><div class="sep"></div><span>10:19 AM</span>
        </div>
      </div>
      <div class="row2">
        <div class="att"><ui-icon name="rar"></ui-icon><div>Documents<br>.rar</div></div>
        <ui-icon class="down" name="mchev"></ui-icon>
      </div>
      <div class="body">
        <div class="txt">
          <p>Good Day,</p>
          <p style="margin-top:18px">Please</p>
          <p style="margin-top:56px">For queries</p>
          <p style="margin-top:16px">Sharjah</p>
          <p style="margin-top:16px">Hamriyah</p>
          <p style="margin-top:15px">Khorfakkan - <a>biju@khorfakkanport.ae</a> / 09-2386</p>
          <p style="margin-top:14px">Timing : 7:30 AM to 3:30 PM (Monday to Thursday)</p>
          <div class="logo"><ui-icon name="eagle"></ui-icon></div>
        </div>
        <div class="sb">
          <div class="k"><i style="border-bottom:5px solid #111"></i></div>
          <div class="th"></div>
          <div class="tr"></div>
          <div class="k"><i style="border-top:5px solid #111"></i></div>
        </div>
      </div>`;
  }
}

class RarWindow extends HTMLElement {
  constructor() {
    super();
    this.attachShadow({mode: 'open'});
    this.shadowRoot.innerHTML = `
      <style>
        :host{position:absolute;left:69px;top:46px;width:243px;height:481px;box-sizing:border-box;background:#fff;border-left:1px solid #8f8f8f;border-bottom:1px solid #a0a0a0;display:flex;flex-direction:column;overflow:hidden;font-size:11.1px;color:#222;white-space:nowrap}
        .tb{height:30px;display:flex;align-items:center;padding:0 0 3px 7px;gap:6px;color:#808080;flex:none;box-sizing:border-box}
        .mn{height:20px;display:flex;align-items:center;flex:none;color:#555;border-bottom:1px solid #eee;padding:0 0 1px 7px;box-sizing:border-box}
        .mn span{flex:none}
        .tools{height:62px;display:flex;flex:none;margin-left:3px;border-left:1px dotted #bbb;background:#fff}
        .t{display:flex;flex-direction:column;align-items:center;padding-top:6px;flex:none;color:#222}
        .t ui-icon{height:34px}
        .t span{line-height:15px;margin-top:1px}
        .adr{height:29px;display:flex;align-items:center;flex:none;border-bottom:2px solid #888}
        .grip{width:1px;height:25px;border-left:1px dotted #bbb;margin-left:20px;box-sizing:border-box;flex:none}
        .adrbox{margin-left:5px;height:24px;flex:1;border:1px solid #666;border-right:0;display:flex;align-items:center;padding:1px 0 0 2px;gap:5px;color:#111;box-sizing:border-box;min-width:0}
        .h{height:24px;display:flex;align-items:center;padding:0 0 1px 7px;position:relative;flex:none;color:#333;box-sizing:border-box}
        .h ui-icon{position:absolute;left:124px;top:0}
        .r{height:18px;display:flex;align-items:center;padding-left:7px;gap:4px;background:#f8f8f8;color:#222;flex:none}
        .sel{height:19px;background:#f3f3f3;margin-top:0}
        .sp{flex:1}
        .st{height:21px;background:#f0f0f0;border-top:1px solid #b8b8b8;display:flex;align-items:center;padding:0 0 1px 4px;gap:2px;flex:none;color:#222;box-sizing:border-box}
      </style>
      <div class="tb"><ui-icon name="rarsm"></ui-icon><span>Documents SPA-H24029629800 details.rar</span></div>
      <div class="mn">
        <span style="width:31px">File</span><span style="width:76px">Commands</span><span style="width:41px">Tools</span><span style="width:61px">Favorites</span><span>Options</span>
      </div>
      <div class="tools">
        <div class="t" style="width:56px;margin-left:5px"><ui-icon name="add"></ui-icon><span>Add</span></div>
        <div class="t" style="width:60px"><ui-icon name="extract"></ui-icon><span>Extract To</span></div>
        <div class="t" style="width:58px"><ui-icon name="test"></ui-icon><span>Test</span></div>
        <div class="t" style="width:50px"><ui-icon name="book"></ui-icon><span>View</span></div>
      </div>
      <div class="adr">
        <ui-icon name="rup" style="margin-left:14px"></ui-icon>
        <div class="grip"></div>
        <div class="adrbox"><ui-icon name="rarsm"></ui-icon><span>Documents SPA-H24029629800 details.rar</span></div>
      </div>
      <div class="h">Name<ui-icon name="sortc"></ui-icon></div>
      <div class="r" style="margin-top:2px"><ui-icon name="rfolder"></ui-icon><span>..</span></div>
      <div class="r sel"><ui-icon name="rsel"></ui-icon><span>Documents SPA-H24029629800 details</span></div>
      <div class="sp"></div>
      <div class="st"><ui-icon name="rdrive" style="margin-right:2px"></ui-icon><ui-icon name="rkey"></ui-icon><span style="margin-left:2px">Selected 1 folder, 3,985,857 bytes</span></div>`;
  }
}

class ExplorerWindow extends HTMLElement {
  constructor() {
    super();
    this.attachShadow({mode: 'open'});
    this.shadowRoot.innerHTML = `
      <style>
        :host{position:absolute;left:312px;top:36px;width:786px;height:594px;background:#fff;display:flex;flex-direction:column;font-size:11.1px;color:#111;overflow:hidden;border-top:1px solid #dff3fb;box-sizing:border-box}
        .tb{height:30px;flex:none;display:flex;align-items:center;padding:0 0 2px 9px;white-space:nowrap;box-sizing:border-box}
        .tb .s{width:1px;height:16px;background:#ccc;flex:none}
        .wb{margin-left:auto;display:flex;align-items:center;margin-right:1px}
        .wb div{width:46px;display:flex;justify-content:center}
        .tabs{height:24px;flex:none;display:flex;align-items:stretch;padding-left:1px;position:relative;line-height:24px;color:#333;border-bottom:1px solid #dcdcdc;box-sizing:border-box}
        .tabs .f{width:56px;background:#0a62ad;color:#fff;text-align:center;height:23px}
        .tabs .h{width:58px;background:#f5f6f7;border:1px solid #dcdcdc;border-bottom:0;text-align:center;box-sizing:border-box;height:24px;color:#222}
        .tabs .t{margin-left:15px;margin-right:15px}
        .tabs .rt{position:absolute;right:4px;top:3px;display:flex;align-items:center;gap:11px}
        .rib{height:91px;flex:none;background:#f5f6f7;border-bottom:1px solid #dadbdc;display:flex;padding-left:2px;box-sizing:border-box}
        .col{display:flex;flex-direction:column;padding-top:1px}
        .nav{height:35px;flex:none;display:flex;align-items:center;position:relative}
        .ad{position:absolute;left:108px;top:8px;width:451px;height:20px;border:1px solid #d9d9d9;box-sizing:border-box;display:flex;align-items:center;color:#222;padding-bottom:1px}
        .se{position:absolute;left:571px;top:8px;width:202px;height:20px;border:1px solid #d9d9d9;box-sizing:border-box;display:flex;align-items:center;padding:0 0 1px 8px;color:#6d6d6d;letter-spacing:.2px}
        .bd{flex:1;display:flex;min-height:0}
        .pane{width:140px;margin-left:1px;flex:none;overflow:hidden;height:386px}
        .main{flex:1;padding:8px 8px 0 10px;min-width:0;box-sizing:border-box}
        .hd{display:flex;align-items:center;height:22px;color:#1e3287;font-size:14px;white-space:nowrap}
        .hd i{flex:1;height:1px;background:#e2e2e2;margin-left:8px}
        .tiles{display:grid;grid-template-columns:228px 228px;grid-auto-rows:48px;row-gap:16px;padding:14px 0 0 37px}
        .st{height:27px;flex:none;display:flex;align-items:center;padding:0 9px 0 15px;color:#444}
        .vw{margin-left:auto;display:flex;gap:7px;align-items:center}
      </style>
      <div class="tb">
        <ui-icon name="qaf"></ui-icon><div class="s" style="margin:0 7px 0 7px"></div>
        <ui-icon name="qcheck"></ui-icon><ui-icon name="qblank" style="margin-left:10px"></ui-icon><ui-icon name="qdrop" style="margin:0 7px 0 12px"></ui-icon>
        <div class="s" style="margin-right:7px"></div><span>File Explorer</span>
        <div class="wb">
          <div><ui-icon name="xmin"></ui-icon></div><div><ui-icon name="xmax"></ui-icon></div><div><ui-icon name="xclose"></ui-icon></div>
        </div>
      </div>
      <div class="tabs">
        <div class="f">File</div><div class="h">Home</div>
        <div class="t">Share</div><div class="t" style="margin-left:14px">View</div>
        <div class="rt"><ui-icon name="collapse"></ui-icon><ui-icon name="help"></ui-icon></div>
      </div>
      <div class="rib">
        <ribbon-group label="Clipboard" w="261">
          <big-button icon="pinbig" w="76" off="5">Pin to Quick<br>access</big-button>
          <big-button icon="copybig" w="32">Copy</big-button>
          <big-button icon="pastebig" w="52">Paste</big-button>
          <div class="col">
            <small-button icon="cut">Cut</small-button>
            <small-button icon="cpath">Copy path</small-button>
            <small-button icon="pshort">Paste shortcut</small-button>
          </div>
        </ribbon-group>
        <ribbon-group label="Organize" w="165" pad="9">
          <div class="col" style="width:84px;padding-top:6px">
            <small-button icon="moveto" h="29" drop="dropg">Move to</small-button>
            <small-button icon="copyto" h="29" drop="dropg">Copy to</small-button>
          </div>
          <div class="col" style="padding-top:6px">
            <small-button icon="del" h="29" drop="dropk" color="#555">Delete</small-button>
            <small-button icon="rename" h="29">Rename</small-button>
          </div>
        </ribbon-group>
        <ribbon-group label="New" w="83">
          <big-button icon="newf" w="49">New<br>folder</big-button>
          <div class="col" style="padding-top:2px">
            <small-button icon="newi" h="22"></small-button>
            <small-button icon="easy" h="22"></small-button>
          </div>
        </ribbon-group>
        <ribbon-group label="Open" w="133">
          <big-button icon="props" w="62">Properties<br><ui-icon name="dropg"></ui-icon></big-button>
          <div class="col" style="margin-left:4px">
            <small-button icon="opens" drop="dropg" iw="17">Open</small-button>
            <small-button icon="edit" iw="17">Edit</small-button>
            <small-button icon="hist" iw="17">History</small-button>
          </div>
        </ribbon-group>
        <ribbon-group label="Select" w="115" pad="7">
          <div class="col">
            <small-button icon="selall" color="#222" iw="19">Select all</small-button>
            <small-button icon="selnone" color="#222" iw="19">Select none</small-button>
            <small-button icon="selinv" color="#222" iw="19">Invert selection</small-button>
          </div>
        </ribbon-group>
      </div>
      <div class="nav">
        <ui-icon name="navb" style="margin-left:13px"></ui-icon>
        <ui-icon name="navf" style="margin-left:15px"></ui-icon>
        <ui-icon name="navd" style="margin-left:8px"></ui-icon>
        <ui-icon name="navu" style="margin-left:17px"></ui-icon>
        <div class="ad">
          <ui-icon name="star" style="margin-left:4px"></ui-icon>
          <ui-icon name="gt" style="margin-left:8px"></ui-icon>
          <span style="margin-left:7px">Quick access</span>
          <ui-icon name="gt" style="margin-left:9px"></ui-icon>
          <ui-icon name="chevd" style="margin-left:auto;margin-right:2px"></ui-icon>
          <div style="width:1px;height:18px;background:#d9d9d9;margin:0 4px 0 1px"></div>
          <ui-icon name="refresh" style="margin-right:3px"></ui-icon>
        </div>
        <div class="se">Search Quick access<ui-icon name="mag" style="margin-left:auto;margin-right:8px"></ui-icon></div>
      </div>
      <div class="bd">
        <div class="pane">
          <nav-row icon="pic" chev="r">Pictures</nav-row>
          <nav-row icon="games">Saved Games</nav-row>
          <nav-row icon="searchi" chev="r" hot>Searches</nav-row>
          <nav-row icon="video">Videos</nav-row>
          <nav-row icon="pc" chev="o" level="1">This PC</nav-row>
          <nav-row icon="cube" chev="r">3D Objects</nav-row>
          <nav-row icon="desk" chev="r">Desktop</nav-row>
          <nav-row icon="doc" chev="r">Documents</nav-row>
          <nav-row icon="dl" chev="r">Downloads</nav-row>
          <nav-row icon="music" chev="r">Music</nav-row>
          <nav-row icon="pic" chev="r">Pictures</nav-row>
          <nav-row icon="video" chev="r">Videos</nav-row>
          <nav-row icon="disk" chev="r">Local Disk (C:)</nav-row>
          <nav-row icon="lib" chev="r" level="1">Libraries</nav-row>
          <nav-row icon="net" chev="r" level="1">Network</nav-row>
          <nav-row icon="cp" chev="o" level="1">Control Panel</nav-row>
        </div>
        <explorer-scroll></explorer-scroll>
        <div class="main">
          <div class="hd"><ui-icon name="chevd" style="margin:0 6px 0 0"></ui-icon>Frequent folders (4)<i></i></div>
          <div class="tiles">
            <folder-tile icon="fdesk" or="6" ob="6">Desktop</folder-tile>
            <folder-tile icon="fdl" or="8" ob="7">Downloads</folder-tile>
            <folder-tile icon="fdoc" or="10" ob="6">Documents</folder-tile>
            <folder-tile icon="fpic" or="7" ob="6">Pictures</folder-tile>
          </div>
        </div>
      </div>
      <div class="st">4 items<div class="vw"><ui-icon name="vdet"></ui-icon><ui-icon name="vtile"></ui-icon></div></div>`;
  }
}

class AnyMark extends HTMLElement {
  constructor() {
    super();
    this.attachShadow({mode: 'open'});
    this.shadowRoot.innerHTML = `
      <style>
        :host{position:absolute;left:1037px;top:608px;width:198px;height:64px;display:flex;align-items:center;justify-content:space-between;pointer-events:none;font-family:"Liberation Sans",sans-serif;font-size:48px;font-weight:700;color:rgba(225,225,225,.4);-webkit-text-stroke:1px rgba(200,200,200,.3);line-height:1}
        span{display:inline-block;transform:scale(.62,1);transform-origin:center}
        svg{position:absolute;left:71px;top:0}
      </style>
      <span style="margin-left:-16px">ANY</span>
      <svg width="58" height="64" viewBox="0 0 58 64"><path d="M1 1v62l55-31zM9 15v34l31-17z" fill="none" stroke="rgba(205,205,205,.45)" stroke-width="3"/></svg>
      <span style="margin-right:-20px;transform:scale(.58,1)">RUN</span>`;
  }
}

class TaskBar extends HTMLElement {
  constructor() {
    super();
    this.attachShadow({mode: 'open'});
    this.shadowRoot.innerHTML = `
      <style>
        :host{display:flex;width:1280px;height:40px;background:#0a1a26;color:#fff;font-size:12px}
        .st{width:48px;background:#04141f;display:flex;align-items:center;justify-content:center;flex:none}
        .sr{width:284px;background:#f3f3f3;border:1px solid #8a9096;box-sizing:border-box;display:flex;align-items:center;color:#333;font-size:14px;padding-left:13px;flex:none;position:relative;overflow:hidden}
        .sr span{margin-left:10px}
        .sr ui-icon.e{position:absolute;right:-1px;top:0}
        .app{width:48px;display:flex;align-items:center;justify-content:center;flex:none;box-sizing:border-box}
        .on{background:linear-gradient(#9cc7ee,#9cc7ee) center bottom/40px 2px no-repeat}
        .act{background:#3a444b linear-gradient(#9cc7ee,#9cc7ee) center bottom/48px 2px no-repeat}
        .tray{margin-left:auto;display:flex;align-items:center}
        .tray .t{width:24px;display:flex;justify-content:center}
        .clk{width:62px;text-align:center;line-height:18px;font-size:11.5px;color:#fff}
        .nt{width:45px;display:flex;justify-content:center}
        .end{width:10px;height:40px;border-right:1px solid #56636d;box-sizing:border-box}
      </style>
      <div class="st"><ui-icon name="start"></ui-icon></div>
      <div class="sr"><ui-icon name="tsearch"></ui-icon><span>Type here to search</span><ui-icon class="e" name="earth"></ui-icon></div>
      <div class="app" style="margin-left:4px"><ui-icon name="taskview"></ui-icon></div>
      <div class="app" style="margin-left:3px"><ui-icon name="edge"></ui-icon></div>
      <div class="app act" style="margin-left:1px"><ui-icon name="xp"></ui-icon></div>
      <div class="app" style="margin-left:1px"><ui-icon name="fox"></ui-icon></div>
      <div class="app on"><ui-icon name="ol"></ui-icon></div>
      <div class="app on" style="margin-left:1px"><ui-icon name="rarbar"></ui-icon></div>
      <div class="tray">
        <div class="t"><ui-icon name="caret"></ui-icon></div>
        <div class="t"><ui-icon name="olt"></ui-icon></div>
        <div class="t"><ui-icon name="meet"></ui-icon></div>
        <div class="t"><ui-icon name="netw"></ui-icon></div>
        <div class="t"><ui-icon name="vol"></ui-icon></div>
        <div class="clk">1:14 PM<br>8/20/2024</div>
        <div class="nt"><ui-icon name="note"></ui-icon></div>
        <div class="end"></div>
      </div>`;
  }
}

customElements.define('ui-icon', UiIcon);
customElements.define('big-button', BigButton);
customElements.define('small-button', SmallButton);
customElements.define('ribbon-group', RibbonGroup);
customElements.define('nav-row', NavRow);
customElements.define('folder-tile', FolderTile);
customElements.define('explorer-scroll', ExplorerScroll);
customElements.define('mail-window', MailWindow);
customElements.define('rar-window', RarWindow);
customElements.define('explorer-window', ExplorerWindow);
customElements.define('any-mark', AnyMark);
customElements.define('task-bar', TaskBar);
</script>
</body>
</html>
